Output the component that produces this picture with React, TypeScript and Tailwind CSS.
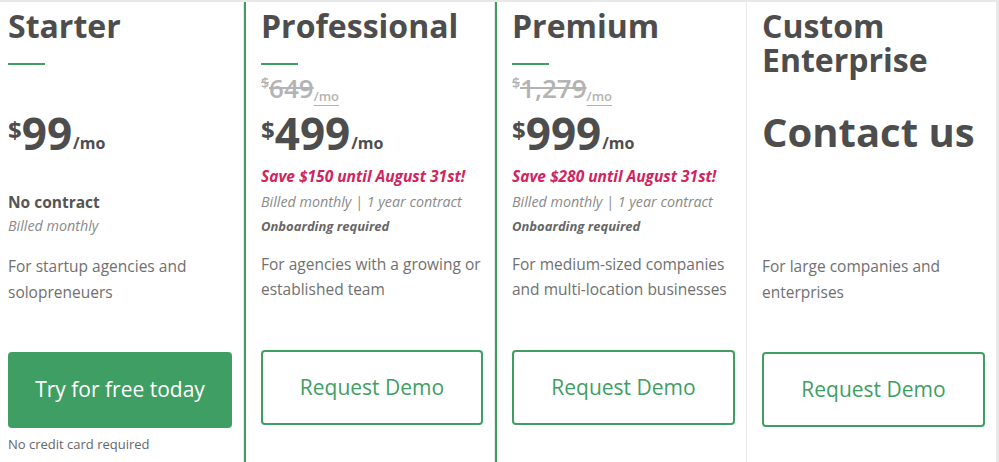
import React from "react";

const font = { fontFamily: '"Open Sans", "Liberation Sans", sans-serif' };

const titleStyle = "text-[32px] leading-[34px] font-bold text-[#4d4d4d]";
const bar = "mt-[20px] h-[2px] w-[37px] bg-[#3f9e63]";
const descStyle = "text-[15.5px] text-[#707070]";
const outlineBtn =
  "flex items-center justify-center h-[75px] w-full rounded-[4px] border-2 border-[#3f9e63] text-[21px] text-[#3f9e63] bg-white";

const OldPrice = ({ amount }: { amount: string }) => (
  <div className="mt-[10px] flex h-[26px] items-start font-semibold text-[#b3b3b3]">
    <span className="text-[14px] leading-none mt-[1px] line-through">$</span>
    <span className="text-[26px] leading-none line-through">{amount}</span>
    <span className="self-end text-[13px] leading-none underline underline-offset-[4px] mb-[-2px]">
      /mo
    </span>
  </div>
);

const Price = ({ amount }: { amount: string }) => (
  <div className="mt-[10px] flex h-[44px] items-start font-bold text-[#4d4d4d]">
    <span className="mt-[7px] text-[24px] leading-none">$</span>
    <span className="text-[44px] leading-none">{amount}</span>
    <span className="self-end mb-[4px] ml-[1px] text-[16px] leading-none">/mo</span>
  </div>
);

type Discounted = {
  name: string;
  oldPrice: string;
  price: string;
  save: string;
  desc: string[];
};

const discounted: Discounted[] = [
  {
    name: "Professional",
    oldPrice: "649",
    price: "499",
    save: "Save $150 until August 31st!",
    desc: ["For agencies with a growing or", "established team"],
  },
  {
    name: "Premium",
    oldPrice: "1,279",
    price: "999",
    save: "Save $280 until August 31st!",
    desc: ["For medium-sized companies", "and multi-location businesses"],
  },
];

export default function App() {
  return (
    <div
      className="w-[999px] h-[462px] overflow-hidden bg-[#e8e8e8] pt-[2px]"
      style={font}
    >
      <div className="grid h-full grid-cols-[243px_250px_251px_249px] gap-px">
        {/* Starter */}
        <div className="flex flex-col bg-white pt-[7px] pl-[8px] pr-[11px]">
          <h2 className={titleStyle}>Starter</h2>
          <div className={bar} />
          <div className="mt-[10px] h-[26px]" />
          <Price amount="99" />
          <div className="mt-[36px] leading-[23px]">
            <p className="text-[15.5px] font-bold text-[#555]">No contract</p>
            <p className="text-[14.3px] italic text-[#8a8a8a]">Billed monthly</p>
          </div>
          <div className={`mt-[16px] leading-[26px] ${descStyle}`}>
            <p>For startup agencies and</p>
            <p>solopreneuers</p>
          </div>
          <button className="mt-[47px] h-[76px] w-full rounded-[4px] bg-[#3f9e63] text-[21px] text-white">
            Try for free today
          </button>
          <p className="mt-[6px] text-[13px] leading-[20px] text-[#666]">
            No credit card required
          </p>
        </div>

        {discounted.map((plan) => (
          <div
            key={plan.name}
            className="flex flex-col border-l-2 border-[#3f9e63] bg-white pt-[7px] pl-[15px] pr-[11px]"
          >
            <h2 className={titleStyle}>{plan.name}</h2>
            <div className={bar} />
            <OldPrice amount={plan.oldPrice} />
            <Price amount={plan.price} />
            <div className="mt-[9px] leading-[25px]">
              <p className="text-[15.5px] font-bold italic text-[#d1245e]">{plan.save}</p>
              <p className="text-[14.3px] italic text-[#8a8a8a]">
                Billed monthly | 1 year contract
              </p>
              <p className="text-[13px] font-bold italic text-[#666]">
                Onboarding required
              </p>
            </div>
            <div className={`mt-[13px] leading-[25px] ${descStyle}`}>
              {plan.desc.map((line) => (
                <p key={line}>{line}</p>
              ))}
            </div>
            <button className={`mt-[48px] ${outlineBtn}`}>Request Demo</button>
          </div>
        ))}

        {/* Custom Enterprise */}
        <div className="flex flex-col bg-white pt-[7px] pl-[15px] pr-[11px]">
          <h2 className={titleStyle}>
            Custom
            <br />
            Enterprise
          </h2>
          <p className="mt-[35px] text-[40px] leading-none font-bold text-[#4d4d4d]">
            Contact us
          </p>
          <div className={`mt-[101px] leading-[26px] ${descStyle}`}>
            <p>For large companies and</p>
            <p>enterprises</p>
          </div>
          <button className={`mt-[47px] ${outlineBtn}`}>Request Demo</button>
        </div>
      </div>
    </div>
  );
}
